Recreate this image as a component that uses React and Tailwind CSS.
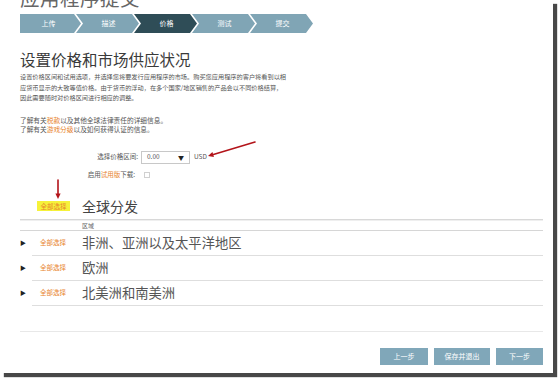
import React from 'react';

const STEPS = [
  { label: '上传', active: false },
  { label: '描述', active: false },
  { label: '价格', active: true },
  { label: '测试', active: false },
  { label: '提交', active: false },
];

const REGIONS = ['非洲、亚洲以及太平洋地区', '欧洲', '北美洲和南美洲'];

const FONT = "font-['Noto_Sans_CJK_SC','Liberation_Sans',sans-serif]";

// red annotation arrow, drawn over the page
const Arrow = ({ className, x1, y1, x2, y2, w, h }) => {
  const ang = Math.atan2(y2 - y1, x2 - x1);
  const len = 6;
  const spread = 0.45;
  const p1 = [x2 - len * Math.cos(ang - spread), y2 - len * Math.sin(ang - spread)];
  const p2 = [x2 - len * Math.cos(ang + spread), y2 - len * Math.sin(ang + spread)];
  return (
    <svg className={className} width={w} height={h} viewBox={`0 0 ${w} ${h}`}>
      <line x1={x1} y1={y1} x2={x2 - 3 * Math.cos(ang)} y2={y2 - 3 * Math.sin(ang)} stroke="#b3141a" strokeWidth="1.6" strokeLinecap="round" />
      <polygon points={`${x2},${y2} ${p1[0]},${p1[1]} ${p2[0]},${p2[1]}`} fill="#b3141a" />
    </svg>
  );
};

export default function App() {
  return (
    <div className={`w-[558px] h-[378px] bg-white overflow-hidden ${FONT}`}>
      <div className="relative w-[553px] h-[373px] bg-white shadow-[4px_4px_1px_rgba(40,40,40,0.85)] overflow-hidden pl-[20px] pr-[10px]">
        {/* ── Page title (cut off at top) ─────────────────────────── */}
        <div className="mt-[-12px] text-[19.5px] leading-[20px] text-[#666] tracking-[0.5px]">应用程序提交</div>

        {/* ── Step bar ────────────────────────────────────────────── */}
        <div className="flex mt-[6px] h-[19px]">
          {STEPS.map((s, i) => (
            <div
              key={s.label}
              className={`h-[19px] flex items-center justify-center text-[7px] text-white ${
                i === 0 ? 'w-[61px] [clip-path:polygon(0_0,calc(100%-7px)_0,100%_50%,calc(100%-7px)_100%,0_100%)]'
                  : 'w-[63px] -ml-[5px] [clip-path:polygon(0_0,calc(100%-7px)_0,100%_50%,calc(100%-7px)_100%,0_100%,7px_50%)]'
              } ${s.active ? 'bg-[#2f4d57]' : 'bg-[#80a5b5]'}`}
            >
              <span className={i === 0 ? 'pr-[4px]' : 'pl-[2px]'}>{s.label}</span>
            </div>
          ))}
        </div>

        {/* ── Heading + intro ─────────────────────────────────────── */}
        <h1 className="mt-[17px] text-[15.5px] leading-[18px] text-[#3a3a3a]">设置价格和市场供应状况</h1>
        <p className="mt-[4px] text-[6.2px] leading-[10.5px] text-[#555] whitespace-nowrap">
          设置价格区间和试用选项，并选择您将要发行应用程序的市场。购买您应用程序的客户将看到以相<br />
          应货币显示的大致等值价格。由于货币的浮动，在多个国家/地区销售的产品会以不同价格结算，<br />
          因此需要随时对价格区间进行相应的调整。
        </p>
        <div className="mt-[12px] text-[6.7px] leading-[9.5px] text-[#555]">
          <p>了解有关<span className="text-[#e8842c]">税款</span>以及其他全球法律责任的详细信息。</p>
          <p>了解有关<span className="text-[#e8842c]">游戏分级</span>以及如何获得认证的信息。</p>
        </div>

        {/* ── Price tier + trial ──────────────────────────────────── */}
        <div className="mt-[16px] flex items-center h-[13px]">
          <span className="w-[118px] text-right text-[6.5px] text-[#555]">选择价格区间:</span>
          <div className="ml-[3px] w-[49px] h-[13px] border border-[#c8c8c8] flex items-center justify-between px-[5px] text-[6.5px] text-[#555]">
            <span>0.00</span>
            <span className="text-[6px] text-[#222]">▼</span>
          </div>
          <span className="ml-[4px] text-[6.5px] text-[#555]">USD</span>
        </div>
        <div className="mt-[6px] flex items-center h-[10px]">
          <span className="w-[115px] text-right text-[6.5px] text-[#555]">
            启用<span className="text-[#e8842c]">试用版</span>下载:
          </span>
          <div className="ml-[9px] w-[6px] h-[6px] border border-[#d0d0d0]" />
        </div>

        {/* ── Global distribution ─────────────────────────────────── */}
        <div className="mt-[18px] flex items-center h-[17px]">
          <span className="ml-[17px] w-[33px] h-[10px] bg-[#f6f23a] text-[#e8842c] text-[6.5px] leading-[10px] text-center">全部选择</span>
          <span className="ml-[12px] text-[14px] leading-[17px] text-[#444]">全球分发</span>
        </div>
        <div className="mt-[4px] border-t border-[#d8d8d8] h-[2px] border-b border-b-[#efefef]" />
        <div className="flex items-center h-[10px] border-b border-[#d6d6d6]">
          <span className="ml-[62px] text-[6px] text-[#666]">区域</span>
        </div>

        {REGIONS.map((r) => (
          <div key={r} className="flex items-center h-[25px] relative">
            <span className="w-[12px] text-[6px] text-[#222] leading-none">▶</span>
            <div className="flex-1 h-full flex items-center border-b border-[#dedede]">
              <span className="ml-[8px] w-[42px] text-[6.5px] text-[#e8842c]">全部选择</span>
              <span className="text-[13.3px] text-[#555]">{r}</span>
            </div>
          </div>
        ))}

        {/* ── Footer ──────────────────────────────────────────────── */}
        <div className="mt-[25px] border-t border-[#e8e8e8]" />
        <div className="mt-[16px] flex justify-end gap-[6px]">
          <button className="w-[48px] h-[17px] bg-[#80a7b9] text-white text-[7px]">上一步</button>
          <button className="w-[56px] h-[17px] bg-[#80a7b9] text-white text-[7px]">保存并退出</button>
          <button className="w-[47px] h-[17px] bg-[#80a7b9] text-white text-[7px]">下一步</button>
        </div>

        {/* ── Annotations ─────────────────────────────────────────── */}
        <Arrow className="absolute left-[200px] top-[138px]" w={60} h={24} x1={55} y1={4} x2={8} y2={18} />
        <Arrow className="absolute left-[52px] top-[178px]" w={12} h={24} x1={6} y1={2} x2={6} y2={21} />
      </div>
    </div>
  );
}
